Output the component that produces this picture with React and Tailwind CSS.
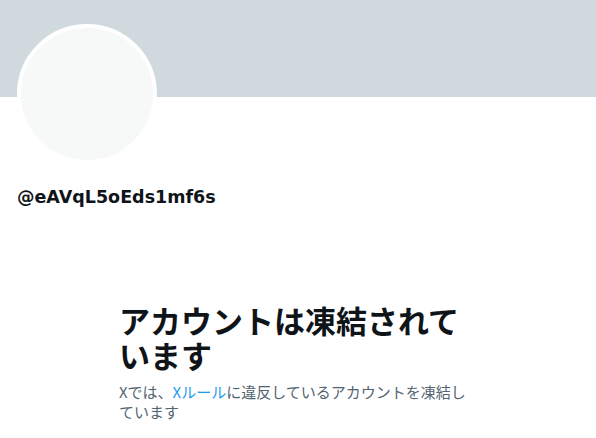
import React from 'react'

export default function App() {
  const font = { fontFamily: '"Noto Sans CJK JP", "Noto Sans", sans-serif' }
  return (
    <div className="w-[596px] h-[438px] bg-white overflow-hidden" style={font}>
      <div className="h-[97px] bg-[#cfd9de]" />
      <div className="px-[17px]">
        <div className="-mt-[73px] w-[140px] h-[140px] rounded-full bg-[#f7f9f9] border-4 border-white" />
        <div className="mt-[21px] text-[17.5px] font-bold text-[#0f1419] leading-[24px]" style={{ fontFamily: '"DejaVu Sans", sans-serif' }}>
          @eAVqL5oEds1mf6s
        </div>
      </div>
      <div className="ml-[119px] w-[352px] mt-[93px]">
        <h1 className="text-[31px] font-bold leading-[35px] text-[#0f1419]">アカウントは凍結されています</h1>
        <p className="mt-[10px] text-[15px] leading-[20px] text-[#536471]">
          Xでは、<span className="text-[#1d9bf0]">Xルール</span>に違反しているアカウントを凍結しています
        </p>
      </div>
    </div>
  )
}
